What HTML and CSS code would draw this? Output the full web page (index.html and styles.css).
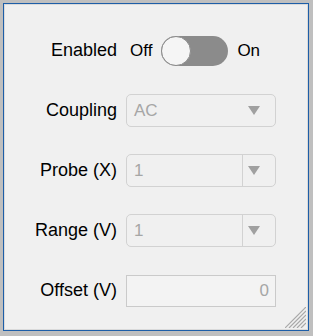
FILE: index.html
```html
<!doctype html>
<html lang="en">
  <head>
    <meta charset="utf-8">
    <title>Channel settings</title>
    <link rel="stylesheet" href="styles.css">
  </head>
  <body>
    <div class="window">
      <div class="form">
        <label class="label">Enabled</label>
        <div class="switch-row">
          <span class="state">Off</span>
          <div class="switch"><div class="knob"></div></div>
          <span class="state">On</span>
        </div>

        <label class="label">Coupling</label>
        <div class="dropdown">
          <span class="value">AC</span>
          <span class="arrow plain">
            <svg class="caret" width="12" height="9" viewBox="0 0 12 9"><polygon points="0,0 12,0 6,9"/></svg>
          </span>
        </div>

        <label class="label">Probe (X)</label>
        <div class="dropdown">
          <span class="value">1</span>
          <span class="arrow">
            <svg class="caret" width="12" height="9" viewBox="0 0 12 9"><polygon points="0,0 12,0 6,9"/></svg>
          </span>
        </div>

        <label class="label">Range (V)</label>
        <div class="dropdown">
          <span class="value">1</span>
          <span class="arrow">
            <svg class="caret" width="12" height="9" viewBox="0 0 12 9"><polygon points="0,0 12,0 6,9"/></svg>
          </span>
        </div>

        <label class="label">Offset (V)</label>
        <div class="field">0</div>
      </div>

      <svg class="grip" width="21" height="21" viewBox="0 0 21 21">
        <line x1="0" y1="21" x2="21" y2="0"/>
        <line x1="4" y1="21" x2="21" y2="4"/>
        <line x1="8" y1="21" x2="21" y2="8"/>
        <line x1="12" y1="21" x2="21" y2="12"/>
        <line x1="16" y1="21" x2="21" y2="16"/>
      </svg>
    </div>
  </body>
</html>
```

FILE: styles.css
```css
body{
    margin:0;
    background-color:#bfbfbf;
    font-family:"Liberation Sans",Arial,sans-serif;
    font-size:17px;
}
.window{
    position:relative;
    box-sizing:border-box;
    margin:3px 4px 5px 3px;
    height:328px;
    border:1px solid #1d5ea8;
    background-color:#f0f0f0;
    box-shadow:inset 0 0 0 1px #dadada;
}
.form{
    display:grid;
    grid-template-columns:113px 150px;
    grid-auto-rows:33px;
    column-gap:9px;
    row-gap:27px;
    padding-top:30px;
}
.label{
    display:flex;
    align-items:center;
    justify-content:flex-end;
    color:#000;
    font-size:18px;
    white-space:nowrap;
}
.switch-row{
    display:flex;
    align-items:center;
    gap:9px;
    padding-left:4px;
}
.state{
    color:#000;
}
.switch{
    width:67px;
    height:30px;
    border-radius:15px;
    background-color:#8b8b8b;
    display:flex;
    align-items:center;
}
.knob{
    box-sizing:border-box;
    width:30px;
    height:30px;
    border-radius:50%;
    background-color:#f5f5f5;
    border:1px solid #8b8b8b;
}
.dropdown{
    box-sizing:border-box;
    display:flex;
    align-items:stretch;
    height:33px;
    border:1px solid #d2d2d2;
    border-radius:5px;
}
.value{
    flex:1;
    display:flex;
    align-items:center;
    padding-left:7px;
    color:#a6a6a6;
}
.arrow{
    display:flex;
    align-items:center;
    border-left:1px solid #d2d2d2;
    padding:0 15px 0 5px;
}
.arrow.plain{
    border-left-color:transparent;
}
.caret{
    fill:#a0a0a0;
}
.field{
    box-sizing:border-box;
    height:32px;
    align-self:center;
    border:1px solid #cacaca;
    background-color:#f3f3f3;
    color:#a6a6a6;
    display:flex;
    align-items:center;
    justify-content:flex-end;
    padding-right:6px;
}
.grip{
    position:absolute;
    right:2px;
    bottom:2px;
    stroke:#a8a8a8;
    stroke-width:1.2;
}
```
